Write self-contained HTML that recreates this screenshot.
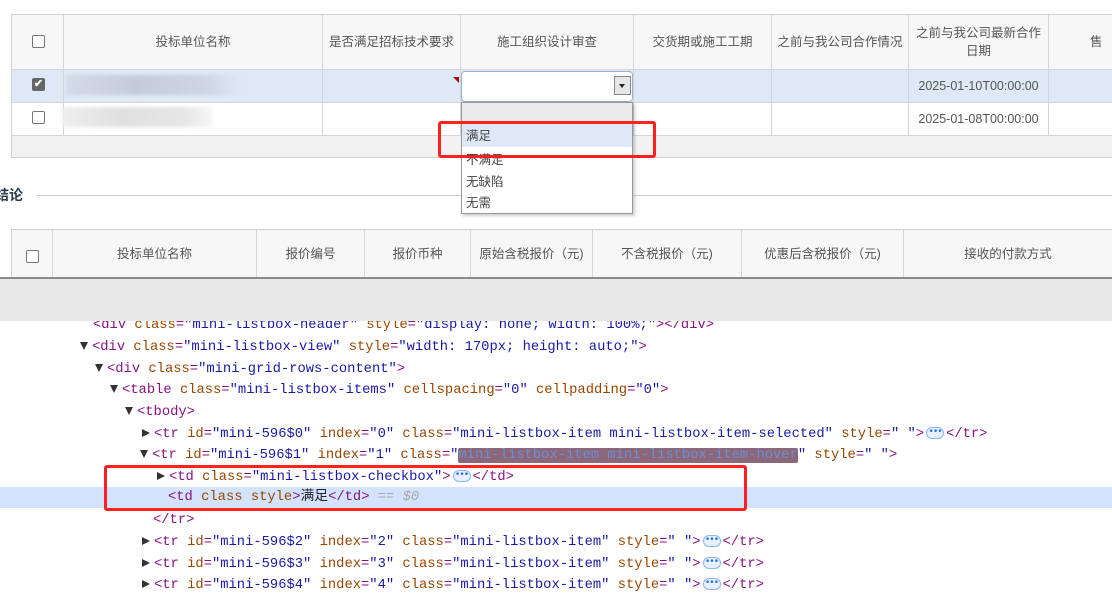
<!DOCTYPE html>
<html><head><meta charset="utf-8">
<style>
*{margin:0;padding:0;box-sizing:border-box}
body{width:1112px;height:600px;overflow:hidden;background:#fff;position:relative;font-family:"Liberation Sans","Noto Sans CJK SC",sans-serif;}
.a{position:absolute}
.t{font-size:12.5px;color:#555;text-align:center;display:flex;align-items:center;justify-content:center;line-height:18px}
.vl{position:absolute;width:1px;background:#d6d6d6}
.hl{position:absolute;height:1px;background:#d6d6d6}
.cb{position:absolute;width:13px;height:13px;border:1px solid #777;border-radius:2px;background:#fff}
.code{position:absolute;left:0;font-family:"Liberation Mono","Noto Sans CJK SC",monospace;font-size:13.8px;white-space:pre;height:21.5px;line-height:21.5px;color:#881280}
.n{color:#994500}.v{color:#1a1aa6}.g{color:#aaa;font-style:italic}
.tri{display:inline-block;width:0;height:0;border-left:4.5px solid transparent;border-right:4.5px solid transparent;border-top:8px solid #333;vertical-align:middle;margin-right:4px}
.trr{display:inline-block;width:0;height:0;border-top:4.5px solid transparent;border-bottom:4.5px solid transparent;border-left:8px solid #333;vertical-align:middle;margin-right:4px}
.dots{display:inline-block;width:18px;height:12px;border:1px solid #8ab4f8;border-radius:6px;background:#e8f0fe;color:#1a73e8;font-size:9px;line-height:8px;text-align:center;vertical-align:middle;margin:0 2px;font-weight:bold;letter-spacing:-1px}
.item{position:absolute;left:0;width:170px;height:22px;font-size:12.5px;color:#444;padding-left:4px;line-height:22px}
</style></head><body>

<div class="a" style="left:11px;top:14px;width:1101px;height:144px;border:1px solid #d0d0d0;border-right:none;background:#fff"></div>
<div class="a" style="left:12px;top:15px;width:1100px;height:54px;background:#f7f7f7"></div>
<div class="a" style="left:12px;top:69px;width:1100px;height:33px;background:#dfe8f6"></div>
<div class="a" style="left:12px;top:136px;width:1100px;height:21px;background:#f2f2f2"></div>
<div class="hl" style="left:12px;top:69px;width:1100px"></div>
<div class="hl" style="left:12px;top:102px;width:1100px"></div>
<div class="hl" style="left:12px;top:135px;width:1100px"></div>
<div class="vl" style="left:63px;top:15px;height:120px"></div>
<div class="vl" style="left:322px;top:15px;height:120px"></div>
<div class="vl" style="left:460px;top:15px;height:120px"></div>
<div class="vl" style="left:633px;top:15px;height:120px"></div>
<div class="vl" style="left:771px;top:15px;height:120px"></div>
<div class="vl" style="left:908px;top:15px;height:120px"></div>
<div class="vl" style="left:1048px;top:15px;height:120px"></div>
<div class="cb" style="left:32px;top:35px"></div>
<div class="a t" style="left:64px;top:15px;width:258px;height:54px">投标单位名称</div>
<div class="a t" style="left:323px;top:15px;width:137px;height:54px">是否满足招标技术要求</div>
<div class="a t" style="left:461px;top:15px;width:172px;height:54px">施工组织设计审查</div>
<div class="a t" style="left:634px;top:15px;width:137px;height:54px">交货期或施工工期</div>
<div class="a t" style="left:772px;top:15px;width:136px;height:54px">之前与我公司合作情况</div>
<div class="a t" style="left:909px;top:15px;width:139px;height:54px">之前与我公司最新合作<br>日期</div>
<div class="a t" style="left:1090px;top:15px;width:40px;height:54px;justify-content:flex-start">售</div>
<div class="a" style="left:32px;top:78px;width:13px;height:13px;background:#666;border-radius:2px;color:#fff;font-size:11px;line-height:13px;text-align:center;font-weight:bold">✔</div>
<div class="cb" style="left:32px;top:111px"></div>
<div class="a" style="left:66px;top:75px;width:175px;height:20px;background:linear-gradient(90deg,#d5dbe6,#c5ccd8 40%,#cfd6e2 80%,#dfe8f6);filter:blur(1.5px)"></div>
<div class="a" style="left:62px;top:107px;width:150px;height:20px;background:linear-gradient(90deg,#eee,#e0e0e0 40%,#e6e6e6 80%,#f6f6f6);filter:blur(1.5px)"></div>
<div class="a" style="left:453px;top:77px;width:0;height:0;border-left:6px solid transparent;border-top:6px solid #b00000"></div>
<div class="a t" style="left:909px;top:69px;width:139px;height:33px">2025-01-10T00:00:00</div>
<div class="a t" style="left:909px;top:102px;width:139px;height:33px">2025-01-08T00:00:00</div>

<div class="a" style="left:461px;top:71px;width:172px;height:31px;border:1px solid #98b0cc;border-radius:4px;background:#fff"></div>
<div class="a" style="left:614px;top:76px;width:17px;height:19px;border:1px solid #888;background:#e6e6e6"></div>
<div class="a" style="left:619px;top:84px;width:0;height:0;border-left:3.5px solid transparent;border-right:3.5px solid transparent;border-top:4px solid #222"></div>

<div class="a" style="left:-5px;top:185px;font-size:14px;font-weight:bold;color:#2c3e50">结论</div>
<div class="a" style="left:36px;top:195px;width:1076px;height:1px;background:#d0d0d0"></div>

<div class="a" style="left:461px;top:102px;width:172px;height:112px;border:1px solid #999;background:#fff;box-shadow:2px 2px 3px rgba(0,0,0,.2);overflow:hidden">
<div class="item" style="top:0;background:#ebebec;height:20px"></div>
<div class="item" style="top:20px;background:#dfe8f6;height:24px;line-height:26px">满足</div>
<div class="item" style="top:46px">不满足</div>
<div class="item" style="top:68px">无缺陷</div>
<div class="item" style="top:89px">无需</div>
</div>
<div class="a" style="left:438px;top:121px;width:218px;height:37px;border:3px solid #ff2020;border-radius:3px"></div>

<div class="a" style="left:11px;top:229px;width:1101px;height:49px;border:1px solid #d0d0d0;border-right:none;border-bottom:none;background:#f7f7f7"></div>
<div class="vl" style="left:52px;top:230px;height:48px"></div>
<div class="vl" style="left:256px;top:230px;height:48px"></div>
<div class="vl" style="left:364px;top:230px;height:48px"></div>
<div class="vl" style="left:470px;top:230px;height:48px"></div>
<div class="vl" style="left:592px;top:230px;height:48px"></div>
<div class="vl" style="left:741px;top:230px;height:48px"></div>
<div class="vl" style="left:903px;top:230px;height:48px"></div>
<div class="cb" style="left:26px;top:250px"></div>
<div class="a t" style="left:53px;top:230px;width:203px;height:48px">投标单位名称</div>
<div class="a t" style="left:257px;top:230px;width:107px;height:48px">报价编号</div>
<div class="a t" style="left:365px;top:230px;width:105px;height:48px">报价币种</div>
<div class="a t" style="left:471px;top:230px;width:121px;height:48px">原始含税报价（元)</div>
<div class="a t" style="left:593px;top:230px;width:148px;height:48px">不含税报价（元)</div>
<div class="a t" style="left:742px;top:230px;width:161px;height:48px">优惠后含税报价（元)</div>
<div class="a t" style="left:904px;top:230px;width:208px;height:48px">接收的付款方式</div>
<div class="a" style="left:0;top:277px;width:1112px;height:2px;background:#8a8a8a"></div>

<div class="a" style="left:0;top:487px;width:1112px;height:21px;background:#d3e3fd"></div>
<div class="code" style="top:315px;left:93px">&lt;div <span class="n">class</span>=<span class="v">"mini-listbox-header"</span> <span class="n">style</span>=<span class="v">"display: none; width: 100%;"</span>&gt;&lt;/div&gt;</div>
<div class="a" style="left:0;top:279px;width:1112px;height:42px;background:#e8e8e8"></div>
<div class="code" style="top:337px;left:80px"><span class="tri"></span>&lt;div <span class="n">class</span>=<span class="v">"mini-listbox-view"</span> <span class="n">style</span>=<span class="v">"width: 170px; height: auto;"</span>&gt;</div>
<div class="code" style="top:359px;left:95px"><span class="tri"></span>&lt;div <span class="n">class</span>=<span class="v">"mini-grid-rows-content"</span>&gt;</div>
<div class="code" style="top:380px;left:110px"><span class="tri"></span>&lt;table <span class="n">class</span>=<span class="v">"mini-listbox-items"</span> <span class="n">cellspacing</span>=<span class="v">"0"</span> <span class="n">cellpadding</span>=<span class="v">"0"</span>&gt;</div>
<div class="code" style="top:402px;left:125px"><span class="tri"></span>&lt;tbody&gt;</div>
<div class="code" style="top:424px;left:142px"><span class="trr"></span>&lt;tr <span class="n">id</span>=<span class="v">"mini-596$0"</span> <span class="n">index</span>=<span class="v">"0"</span> <span class="n">class</span>=<span class="v">"mini-listbox-item mini-listbox-item-selected"</span> <span class="n">style</span>=<span class="v">" "</span>&gt;<span class="dots">•••</span>&lt;/tr&gt;</div>
<div class="code" style="top:445px;left:140px"><span class="tri"></span>&lt;tr <span class="n">id</span>=<span class="v">"mini-596$1"</span> <span class="n">index</span>=<span class="v">"1"</span> <span class="n">class</span>=<span class="v">"<span style="background:#8c6679;color:#6a8fd4;border-radius:2px">mini-listbox-item mini-listbox-item-hover</span>"</span> <span class="n">style</span>=<span class="v">" "</span>&gt;</div>
<div class="code" style="top:467px;left:157px"><span class="trr"></span>&lt;td <span class="n">class</span>=<span class="v">"mini-listbox-checkbox"</span>&gt;<span class="dots">•••</span>&lt;/td&gt;</div>
<div class="code" style="top:487px;left:168px">&lt;td <span class="n">class</span> <span class="n">style</span>&gt;<span style="color:#222">满足</span>&lt;/td&gt; <span class="g">== $0</span></div>
<div class="code" style="top:510px;left:153px">&lt;/tr&gt;</div>
<div class="code" style="top:532px;left:142px"><span class="trr"></span>&lt;tr <span class="n">id</span>=<span class="v">"mini-596$2"</span> <span class="n">index</span>=<span class="v">"2"</span> <span class="n">class</span>=<span class="v">"mini-listbox-item"</span> <span class="n">style</span>=<span class="v">" "</span>&gt;<span class="dots">•••</span>&lt;/tr&gt;</div>
<div class="code" style="top:554px;left:142px"><span class="trr"></span>&lt;tr <span class="n">id</span>=<span class="v">"mini-596$3"</span> <span class="n">index</span>=<span class="v">"3"</span> <span class="n">class</span>=<span class="v">"mini-listbox-item"</span> <span class="n">style</span>=<span class="v">" "</span>&gt;<span class="dots">•••</span>&lt;/tr&gt;</div>
<div class="code" style="top:575px;left:142px"><span class="trr"></span>&lt;tr <span class="n">id</span>=<span class="v">"mini-596$4"</span> <span class="n">index</span>=<span class="v">"4"</span> <span class="n">class</span>=<span class="v">"mini-listbox-item"</span> <span class="n">style</span>=<span class="v">" "</span>&gt;<span class="dots">•••</span>&lt;/tr&gt;</div>
<div class="a" style="left:104px;top:465px;width:643px;height:46px;border:3px solid #ff2020;border-radius:3px"></div>
</body></html>
